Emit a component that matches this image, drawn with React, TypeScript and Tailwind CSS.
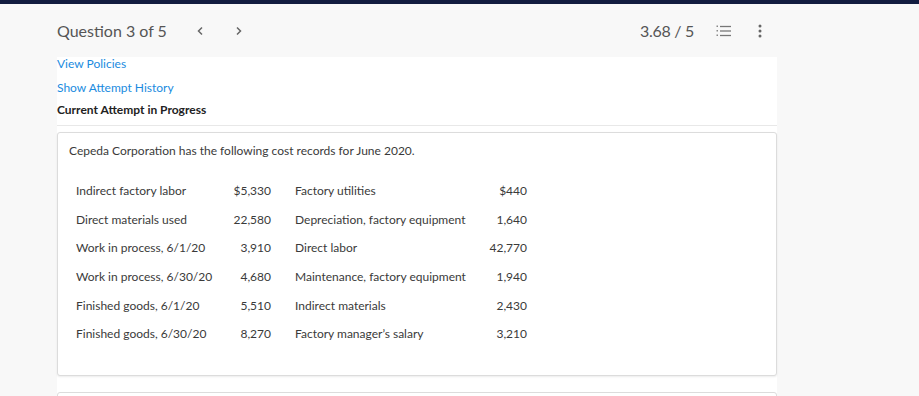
import React from "react";

const rows: [string, string, string, string][] = [
  ["Indirect factory labor", "$5,330", "Factory utilities", "$440"],
  ["Direct materials used", "22,580", "Depreciation, factory equipment", "1,640"],
  ["Work in process, 6/1/20", "3,910", "Direct labor", "42,770"],
  ["Work in process, 6/30/20", "4,680", "Maintenance, factory equipment", "1,940"],
  ["Finished goods, 6/1/20", "5,510", "Indirect materials", "2,430"],
  ["Finished goods, 6/30/20", "8,270", "Factory manager\u2019s salary", "3,210"],
];

export default function App() {
  return (
    <div
      className="w-[919px] h-[396px] overflow-hidden bg-[#f8f8f8] flex flex-col"
      style={{ fontFamily: "Lato, 'Open Sans', sans-serif" }}
    >
      <div className="h-[4px] shrink-0 bg-[#121c40]" />
      <div className="h-[53px] shrink-0 flex items-center pl-[57px] pr-[157px]">
        <span className="text-[16px] text-[#555] leading-none">Question 3 of 5</span>
        <svg className="ml-[29px]" width="8" height="10" viewBox="0 0 8 10">
          <path d="M6 1.5 L2.5 5 L6 8.5" fill="none" stroke="#666" strokeWidth="1.5" />
        </svg>
        <svg className="ml-[31px]" width="8" height="10" viewBox="0 0 8 10">
          <path d="M2 1.5 L5.5 5 L2 8.5" fill="none" stroke="#666" strokeWidth="1.5" />
        </svg>
        <div className="flex-1" />
        <span className="text-[16px] text-[#555] leading-none tracking-[-0.3px]">3.68 / 5</span>
        <svg className="ml-[22px]" width="16" height="14" viewBox="0 0 16 14">
          <g fill="#888">
            <rect x="0.5" y="1.5" width="1.5" height="1.5" />
            <rect x="0.5" y="6" width="1.5" height="1.5" />
            <rect x="0.5" y="10.5" width="1.5" height="1.5" />
          </g>
          <g stroke="#777" strokeWidth="1.3">
            <line x1="4" y1="2.5" x2="15" y2="2.5" />
            <line x1="4" y1="7" x2="15" y2="7" />
            <line x1="4" y1="11.5" x2="15" y2="11.5" />
          </g>
        </svg>
        <svg className="ml-[26px]" width="4" height="14" viewBox="0 0 4 14">
          <g fill="#666">
            <circle cx="2" cy="2" r="1.5" />
            <circle cx="2" cy="7" r="1.5" />
            <circle cx="2" cy="12" r="1.5" />
          </g>
        </svg>
      </div>
      <div className="ml-[57px] w-[720px] flex-1 min-h-0 bg-white flex flex-col">
        <div className="shrink-0 border-b border-[#e8e8e8] pb-[8px] text-[12px]">
          <div className="text-[#1a8be0] leading-[14px]">View Policies</div>
          <div className="text-[#1a8be0] leading-[14px] mt-[10px]">Show Attempt History</div>
          <div className="text-[#222] font-bold leading-[14px] mt-[8px]">Current Attempt in Progress</div>
        </div>
        <div className="shrink-0 mt-[6px] h-[244px] border border-[#dcdcdc] rounded-[3px] shadow-[0_1px_2px_rgba(0,0,0,0.08)] bg-white pl-[11px] pt-[11px] text-[12px] text-[#3a3a3a]">
          <div className="leading-[14px]">Cepeda Corporation has the following cost records for June 2020.</div>
          <div className="mt-[19px] ml-[7px] grid grid-cols-[150px_45px_24px_180px_52px] auto-rows-[28.6px] items-center">
            {rows.map((r, i) => (
              <React.Fragment key={i}>
                <div>{r[0]}</div>
                <div className="text-right">{r[1]}</div>
                <div />
                <div>{r[2]}</div>
                <div className="text-right">{r[3]}</div>
              </React.Fragment>
            ))}
          </div>
        </div>
        <div className="shrink-0 mt-[16px] h-[10px] border border-[#dcdcdc] rounded-[3px]" />
      </div>
    </div>
  );
}
